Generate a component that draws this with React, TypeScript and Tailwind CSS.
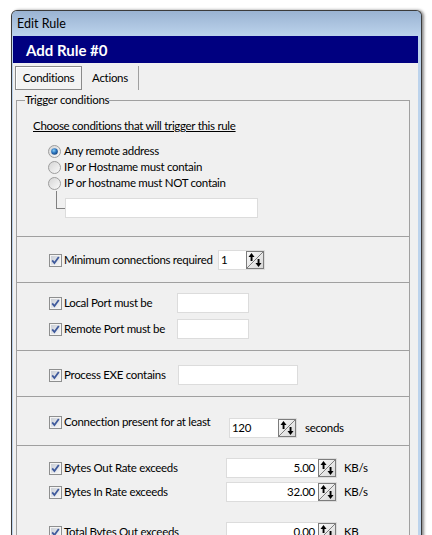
import React from 'react'

function SpinButton() {
  return (
    <svg width="18" height="18" viewBox="0 0 18 18" className="shrink-0">
      <defs>
        <linearGradient id="spinbg" x1="0" y1="0" x2="1" y2="1">
          <stop offset="0" stopColor="#fbfbfb" />
          <stop offset="1" stopColor="#d6d6d6" />
        </linearGradient>
      </defs>
      <rect x="0.5" y="0.5" width="17" height="17" fill="url(#spinbg)" stroke="#7c7c7c" />
      <line x1="1" y1="17" x2="17" y2="1" stroke="#7e7e7e" />
      <path d="M5.5 2 L2.5 6 H8.5 Z" fill="#000" />
      <rect x="4.6" y="5.5" width="1.9" height="4.5" fill="#000" />
      <path d="M12.5 16 L9.5 12 H15.5 Z" fill="#000" />
      <rect x="11.6" y="8" width="1.9" height="4.5" fill="#000" />
    </svg>
  )
}

function CheckBox() {
  return (
    <svg width="13" height="13" viewBox="0 0 13 13" className="shrink-0">
      <defs>
        <linearGradient id="chkbg" x1="0" y1="0" x2="1" y2="1">
          <stop offset="0" stopColor="#c9ced6" />
          <stop offset="1" stopColor="#f7f7f7" />
        </linearGradient>
      </defs>
      <rect x="0.5" y="0.5" width="12" height="12" fill="#f4f4f4" stroke="#8e8f8f" />
      <rect x="2" y="2" width="9" height="9" fill="url(#chkbg)" />
      <path d="M3.2 6.4 L5.4 9 L9.8 3" fill="none" stroke="#3f5a9c" strokeWidth="1.8" />
    </svg>
  )
}

function Radio({ checked }: { checked?: boolean }) {
  return (
    <svg width="13" height="13" viewBox="0 0 13 13" className="shrink-0">
      <defs>
        <linearGradient id="radbg" x1="0" y1="0" x2="1" y2="1">
          <stop offset="0" stopColor="#d4d4d4" />
          <stop offset="1" stopColor="#fbfbfb" />
        </linearGradient>
        <radialGradient id="raddot" cx="0.4" cy="0.35" r="0.7">
          <stop offset="0" stopColor="#8ad0f5" />
          <stop offset="0.5" stopColor="#2e78c2" />
          <stop offset="1" stopColor="#143f78" />
        </radialGradient>
      </defs>
      <circle cx="6.5" cy="6.5" r="6" fill="url(#radbg)" stroke="#9d9d9d" />
      {checked && <circle cx="6.5" cy="6.5" r="3.3" fill="url(#raddot)" />}
    </svg>
  )
}

function Check({ label, width }: { label: string; width: number }) {
  return (
    <div className="flex items-center gap-[2px] shrink-0" style={{ width }}>
      <CheckBox />
      <span className="whitespace-nowrap">{label}</span>
    </div>
  )
}

function SpinBox({ value, width, right }: { value: string; width: number; right?: boolean }) {
  return (
    <div
      className="h-[20px] flex items-center bg-white border border-[#dcdcdc] shrink-0"
      style={{ width }}
    >
      <span className={'flex-1 px-[2px] ' + (right ? 'text-right pr-[3px]' : '')}>{value}</span>
      <SpinButton />
    </div>
  )
}

function TextBox({ width }: { width: number }) {
  return <div className="h-[20px] bg-white border border-[#dcdcdc] shrink-0" style={{ width }} />
}

export default function App() {
  return (
    <div className="w-[432px] h-[535px] overflow-hidden bg-white font-['Lato',sans-serif] text-[11.5px] tracking-[-0.3px] text-black leading-[14px]">
      <div className="ml-[11px] mt-[10px] w-[411px] h-[600px] rounded-t-[6px] border-t border-l border-r border-[#3b3b3b] bg-[#bcd3ec] shadow-[2px_0_3px_rgba(0,0,0,0.45)] overflow-hidden">
        {/* title bar */}
        <div className="h-[25px] bg-linear-to-b from-[#9ab3d2] to-[#bcd3ec] flex items-center pl-[5px] text-[12.5px] tracking-normal">
          Edit Rule
        </div>

        <div className="ml-px mr-[3px] h-[600px] bg-[#f0f0f0]">
          <div className="h-[27px] bg-[#000080] text-white font-bold text-[15px] tracking-normal flex items-center pl-[13px]">
            Add Rule #0
          </div>

          {/* tabs */}
          <div className="h-[27px] flex items-start pl-[2px] pt-[3px]">
            <div className="w-[67px] h-[24px] border border-[#8a8a8a] bg-[#f3f3f3] flex items-center justify-center shadow-[inset_1px_1px_0_#ffffff]">
              Conditions
            </div>
            <div className="w-[57px] h-[24px] border-r border-[#a0a0a0] flex items-center justify-center">
              Actions
            </div>
          </div>

          <fieldset className="ml-[3px] w-[394px] mt-[3px] border border-[#a0a0a0] h-[500px]">
            <legend className="ml-[8px] leading-[14px]">Trigger conditions</legend>

            {/* section 1 */}
            <div className="h-[129px] pl-[16px] pt-[12px]">
              <div className="underline">Choose conditions that will trigger this rule</div>
              <div className="mt-[10px] pl-[15px] flex flex-col">
                <div className="h-[16px] flex items-center gap-[3px]">
                  <Radio checked />
                  <span>Any remote address</span>
                </div>
                <div className="h-[16px] flex items-center gap-[3px]">
                  <Radio />
                  <span>IP or Hostname must contain</span>
                </div>
                <div className="h-[16px] flex items-center gap-[3px]">
                  <Radio />
                  <span>IP or hostname must NOT contain</span>
                </div>
              </div>
              <div className="flex items-start ml-[23px]">
                <div className="w-[9px] h-[18px] border-l border-b border-[#808080]" />
                <div className="mt-[7px]">
                  <TextBox width={193} />
                </div>
              </div>
            </div>

            {/* minimum connections */}
            <div className="h-[46px] border-t border-[#a0a0a0] pl-[32px] pt-[13px] flex items-start">
              <div className="h-[20px] flex items-center">
                <Check label="Minimum connections required" width={169} />
                <SpinBox value="1" width={47} />
              </div>
            </div>

            {/* ports */}
            <div className="h-[68px] border-t border-[#a0a0a0] pl-[32px] pt-[10px] flex flex-col gap-[6px]">
              <div className="h-[20px] flex items-center">
                <Check label="Local Port must be" width={128} />
                <TextBox width={72} />
              </div>
              <div className="h-[20px] flex items-center">
                <Check label="Remote Port must be" width={128} />
                <TextBox width={72} />
              </div>
            </div>

            {/* process */}
            <div className="h-[46px] border-t border-[#a0a0a0] pl-[32px] pt-[14px]">
              <div className="h-[20px] flex items-center">
                <Check label="Process EXE contains" width={129} />
                <TextBox width={120} />
              </div>
            </div>

            {/* duration */}
            <div className="h-[49px] border-t border-[#a0a0a0] pl-[32px] pt-[17px] flex items-start">
              <div className="h-[16px] flex items-center">
                <Check label="Connection present for at least" width={180} />
              </div>
              <div className="mt-[4px] flex items-center gap-[8px]">
                <SpinBox value="120" width={68} />
                <span>seconds</span>
              </div>
            </div>

            {/* bytes */}
            <div className="border-t border-[#a0a0a0] pl-[32px] pt-[12px] flex flex-col">
              <div className="h-[20px] flex items-center">
                <Check label="Bytes Out Rate exceeds" width={177} />
                <SpinBox value="5.00" width={111} right />
                <span className="ml-[7px]">KB/s</span>
              </div>
              <div className="h-[20px] mt-[4px] flex items-center">
                <Check label="Bytes In Rate exceeds" width={177} />
                <SpinBox value="32.00" width={111} right />
                <span className="ml-[7px]">KB/s</span>
              </div>
              <div className="h-[20px] mt-[20px] flex items-center">
                <Check label="Total Bytes Out exceeds" width={177} />
                <SpinBox value="0.00" width={111} right />
                <span className="ml-[7px]">KB</span>
              </div>
            </div>
          </fieldset>
        </div>
      </div>
    </div>
  )
}
